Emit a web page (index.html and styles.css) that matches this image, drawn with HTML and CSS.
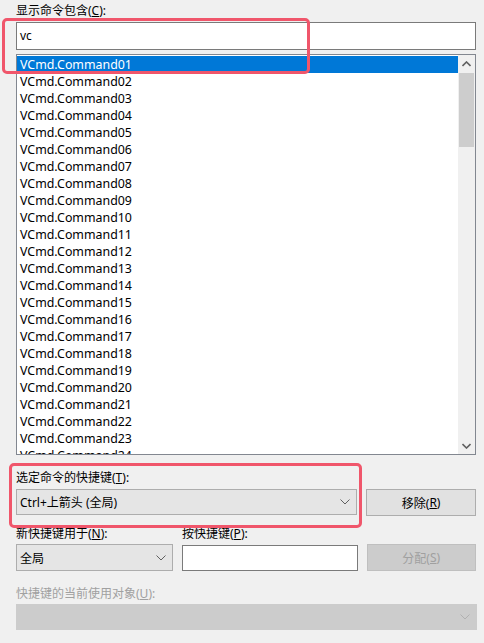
FILE: index.html
```html
<!DOCTYPE html>
<html lang="zh-CN">
<head>
<meta charset="utf-8">
<title>快捷键</title>
<link rel="stylesheet" href="styles.css">
</head>
<body>
<div class="panel">
  <div class="label">显示命令包含(<u>C</u>):</div>
  <div class="textbox">vc</div>
  <div class="listbox">
    <div class="items">
      <div class="item selected">VCmd.Command01</div>
      <div class="item">VCmd.Command02</div>
      <div class="item">VCmd.Command03</div>
      <div class="item">VCmd.Command04</div>
      <div class="item">VCmd.Command05</div>
      <div class="item">VCmd.Command06</div>
      <div class="item">VCmd.Command07</div>
      <div class="item">VCmd.Command08</div>
      <div class="item">VCmd.Command09</div>
      <div class="item">VCmd.Command10</div>
      <div class="item">VCmd.Command11</div>
      <div class="item">VCmd.Command12</div>
      <div class="item">VCmd.Command13</div>
      <div class="item">VCmd.Command14</div>
      <div class="item">VCmd.Command15</div>
      <div class="item">VCmd.Command16</div>
      <div class="item">VCmd.Command17</div>
      <div class="item">VCmd.Command18</div>
      <div class="item">VCmd.Command19</div>
      <div class="item">VCmd.Command20</div>
      <div class="item">VCmd.Command21</div>
      <div class="item">VCmd.Command22</div>
      <div class="item">VCmd.Command23</div>
      <div class="item">VCmd.Command24</div>
    </div>
    <div class="scrollbar">
      <div class="sb-btn"><svg width="9" height="6" viewBox="0 0 9 6"><polyline points="0.5,5 4.5,1 8.5,5" fill="none" stroke="#606060" stroke-width="1.6"/></svg></div>
      <div class="sb-track"><div class="sb-thumb"></div></div>
      <div class="sb-btn"><svg width="9" height="6" viewBox="0 0 9 6"><polyline points="0.5,1 4.5,5 8.5,1" fill="none" stroke="#606060" stroke-width="1.6"/></svg></div>
    </div>
  </div>

  <div class="label label-sec">选定命令的快捷键(<u>T</u>):</div>
  <div class="row">
    <div class="combo combo-wide"><span>Ctrl+上箭头 (全局)</span><svg class="chev" width="10" height="6" viewBox="0 0 10 6"><polyline points="0.5,0.5 5,5 9.5,0.5" fill="none" stroke="#606060" stroke-width="1"/></svg></div>
    <div class="button">移除(<u>R</u>)</div>
  </div>

  <div class="row labels-row">
    <div class="label col-a">新快捷键用于(<u>N</u>):</div>
    <div class="label">按快捷键(<u>P</u>):</div>
  </div>
  <div class="row row-tight">
    <div class="combo combo-small"><span>全局</span><svg class="chev" width="10" height="6" viewBox="0 0 10 6"><polyline points="0.5,0.5 5,5 9.5,0.5" fill="none" stroke="#606060" stroke-width="1"/></svg></div>
    <div class="textbox textbox-key"></div>
    <div class="button disabled">分配(<u>S</u>)</div>
  </div>

  <div class="label label-dis">快捷键的当前使用对象(<u>U</u>):</div>
  <div class="combo combo-dis"><span></span><svg class="chev" width="10" height="6" viewBox="0 0 10 6"><polyline points="0.5,0.5 5,5 9.5,0.5" fill="none" stroke="#b0b0b0" stroke-width="1"/></svg></div>
</div>

<div class="mark mark-1"></div>
<div class="mark mark-2"></div>
</body>
</html>
```
FILE: styles.css
```css
html, body {
  margin: 0;
  padding: 0;
  background: #f0f0f0;
}
body {
  font-family: "Noto Sans", "Noto Sans CJK SC", sans-serif;
  font-size: 12px;
  color: #000;
  width: 484px;
  height: 643px;
  overflow: hidden;
  position: relative;
}
u {
  text-decoration: underline;
  text-underline-offset: 1px;
}
.panel {
  padding: 3px 8px 0 16px;
  display: flex;
  flex-direction: column;
}
.label {
  height: 16px;
  line-height: 16px;
  white-space: nowrap;
}
.textbox {
  margin-top: 3px;
  height: 28px;
  box-sizing: border-box;
  border: 1px solid #7a7a7a;
  background: #fff;
  padding-left: 3px;
  line-height: 25px;
}
.listbox {
  margin-top: 4px;
  height: 401px;
  box-sizing: border-box;
  border: 1px solid #828790;
  background: #fff;
  display: flex;
}
.items {
  flex: 1;
  overflow: hidden;
  padding-top: 1px;
}
.item {
  height: 17px;
  line-height: 17px;
  padding-left: 3px;
  white-space: nowrap;
  font-size: 12.4px;
}
.item.selected {
  background: #0078d7;
  color: #fff;
}
.scrollbar {
  width: 17px;
  display: flex;
  flex-direction: column;
  background: #f0f0f0;
}
.sb-btn {
  height: 17px;
  display: flex;
  align-items: center;
  justify-content: center;
}
.sb-track {
  flex: 1;
  padding: 1px 1px 0;
}
.sb-thumb {
  height: 74px;
  background: #cdcdcd;
}
.label-sec {
  margin-top: 15px;
}
.row {
  display: flex;
  gap: 9px;
  margin-top: 3px;
}
.row-tight {
  margin-top: 2px;
}
.combo {
  height: 26px;
  box-sizing: border-box;
  border: 1px solid #adadad;
  background: #e5e5e5;
  display: flex;
  align-items: center;
  justify-content: space-between;
  padding: 0 6px 0 3px;
}
.combo-wide {
  width: 342px;
}
.combo-small {
  width: 158px;
  height: 27px;
}
.chev {
  display: block;
}
.button {
  width: 110px;
  height: 27px;
  box-sizing: border-box;
  border: 1px solid #adadad;
  background: #e1e1e1;
  display: flex;
  align-items: center;
  justify-content: center;
}
.button.disabled {
  background: #cccccc;
  border-color: #bfbfbf;
  color: #a0a0a0;
}
.labels-row {
  margin-top: 10px;
  gap: 0;
}
.col-a {
  width: 166px;
}
.textbox-key {
  margin-top: 1px;
  width: 176px;
  height: 26px;
}
.label-dis {
  margin-top: 15px;
  color: #a0a0a0;
}
.combo-dis {
  margin-top: 2px;
  width: 461px;
  background: #cccccc;
  border-color: #cccccc;
}
.mark {
  position: absolute;
  border: 3px solid #f0566b;
  border-radius: 5px;
  box-sizing: border-box;
  pointer-events: none;
}
.mark-1 {
  left: 2px;
  top: 18px;
  width: 308px;
  height: 56px;
}
.mark-2 {
  left: 9px;
  top: 463px;
  width: 353px;
  height: 65px;
}
```
